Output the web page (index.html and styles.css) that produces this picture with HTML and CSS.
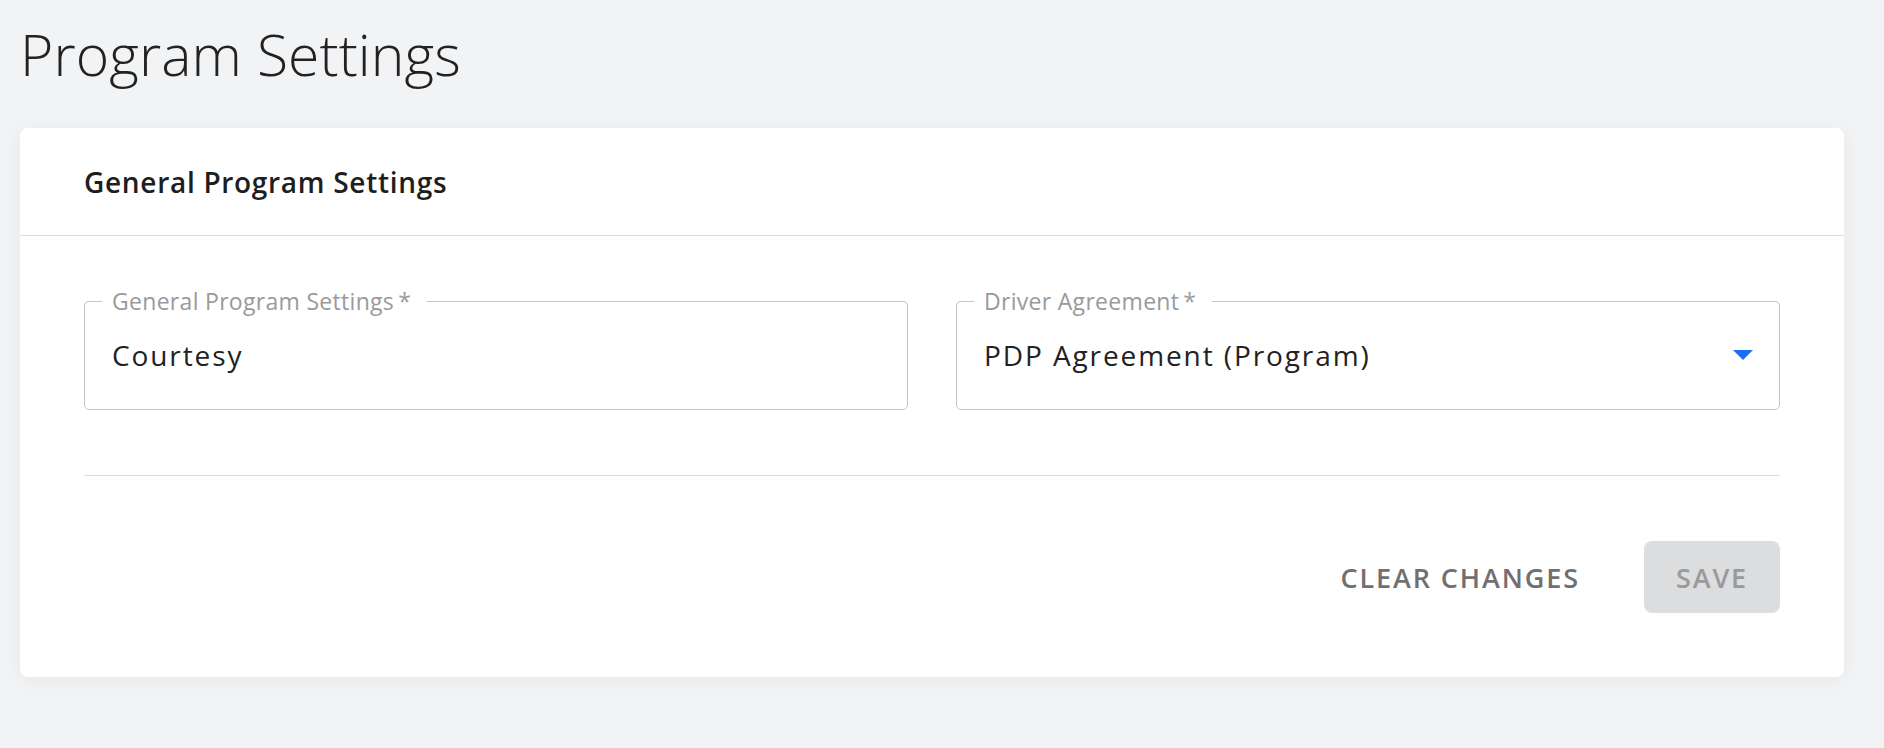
FILE: index.html
```html
<!DOCTYPE html>
<html lang="en">
<head>
<meta charset="utf-8">
<title>Program Settings</title>
<link rel="stylesheet" href="styles.css">
</head>
<body>
<main class="page">
  <h1 class="page-title">Program Settings</h1>
  <section class="card">
    <header class="card-header">
      <h2 class="card-title">General Program Settings</h2>
    </header>
    <div class="card-body">
      <div class="fields">
        <fieldset class="field">
          <legend class="field-label">General Program Settings&thinsp;*</legend>
          <div class="field-value">Courtesy</div>
        </fieldset>
        <fieldset class="field">
          <legend class="field-label">Driver Agreement&thinsp;*</legend>
          <div class="field-value field-select">
            <span>PDP Agreement (Program)</span>
            <svg class="caret" width="20" height="10" viewBox="0 0 20 10" aria-hidden="true"><path d="M0 0H20L10 10Z" fill="#1a6ff2"/></svg>
          </div>
        </fieldset>
      </div>
      <hr class="divider">
      <div class="actions">
        <button class="btn btn-text" type="button">CLEAR CHANGES</button>
        <button class="btn btn-save" type="button" disabled>SAVE</button>
      </div>
    </div>
  </section>
</main>
</body>
</html>
```
FILE: styles.css
```css
* { box-sizing: border-box; }
html, body { margin: 0; padding: 0; }
body {
  background: #f2f3f5;
  font-family: "Open Sans", "Noto Sans", sans-serif;
  color: #222;
}
.page {
  padding: 15px 40px 40px 20px;
}
.page-title {
  margin: 0 0 35px 0;
  font-weight: 300;
  font-size: 57px;
  line-height: 78px;
  color: #222;
  letter-spacing: 0.1px;
}
.card {
  background: #fff;
  border-radius: 8px;
  box-shadow: 0 4px 20px rgba(0, 0, 0, 0.05);
  height: 549px;
}
.card-header {
  height: 108px;
  border-bottom: 1px solid #dcdcdc;
  display: flex;
  align-items: center;
  padding-left: 64px;
}
.card-title {
  margin: 0;
  font-size: 28px;
  font-weight: 600;
  color: #1e1e1e;
  letter-spacing: 0.7px;
}
.card-body {
  padding: 52px 64px 0 64px;
}
.fields {
  display: grid;
  grid-template-columns: 1fr 1fr;
  gap: 48px;
}
.field {
  margin: 0;
  padding: 0 17px;
  border: 1px solid #c4c4c4;
  border-radius: 5px;
  min-width: 0;
}
.field-label {
  padding: 0 16px 0 10px;
  font-size: 23px;
  line-height: 26px;
  color: #9a9a9a;
  letter-spacing: 0.3px;
}
.field-value {
  padding: 21px 0 34px 10px;
  font-size: 28px;
  line-height: 40px;
  color: #222;
  letter-spacing: 1.9px;
}
.field-select {
  display: flex;
  align-items: center;
  justify-content: space-between;
}
.caret {
  margin-right: 9px;
  flex: none;
}
.divider {
  margin: 65px 0 0 0;
  border: 0;
  border-top: 1px solid #dcdcdc;
}
.actions {
  display: flex;
  justify-content: flex-end;
  align-items: center;
  gap: 32px;
  margin-top: 65px;
}
.btn {
  font-family: inherit;
  font-size: 27px;
  font-weight: 600;
  letter-spacing: 1.9px;
  border: 0;
  border-radius: 8px;
  height: 72px;
  cursor: pointer;
}
.btn-text {
  background: transparent;
  color: #707070;
  padding: 0 32px;
}
.btn-save {
  background: #dcdddf;
  color: #9a9a9a;
  width: 136px;
  padding: 0;
  cursor: default;
}
```
